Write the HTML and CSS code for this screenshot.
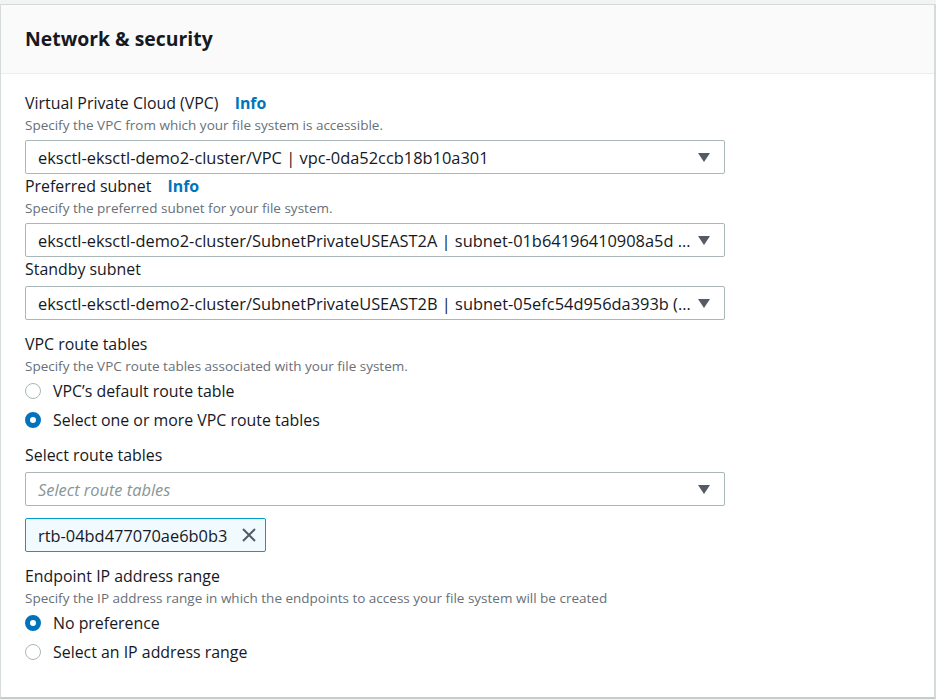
FILE: index.html
```html
<!DOCTYPE html>
<html lang="en">
<head>
<meta charset="utf-8">
<title>Network &amp; security</title>
<link rel="stylesheet" href="styles.css">
</head>
<body>
<section class="panel">
  <header class="panel-header">
    <h2 class="panel-title">Network &amp; security</h2>
  </header>
  <div class="panel-body">
    <div class="field">
      <div class="label">Virtual Private Cloud (VPC) <a class="info">Info</a></div>
      <div class="desc">Specify the VPC from which your file system is accessible.</div>
      <div class="select"><span class="select-text">eksctl-eksctl-demo2-cluster/VPC | vpc-0da52ccb18b10a301</span><span class="caret"></span></div>
    </div>
    <div class="field">
      <div class="label">Preferred subnet <a class="info">Info</a></div>
      <div class="desc">Specify the preferred subnet for your file system.</div>
      <div class="select"><span class="select-text">eksctl-eksctl-demo2-cluster/SubnetPrivateUSEAST2A | subnet-01b64196410908a5d (us-east-2a)</span><span class="caret"></span></div>
    </div>
    <div class="field">
      <div class="label">Standby subnet</div>
      <div class="select"><span class="select-text">eksctl-eksctl-demo2-cluster/SubnetPrivateUSEAST2B | subnet-05efc54d956da393b (us-east-2b)</span><span class="caret"></span></div>
    </div>
    <div class="field field-gap">
      <div class="label">VPC route tables</div>
      <div class="desc">Specify the VPC route tables associated with your file system.</div>
      <div class="radios">
        <div class="radio"><span class="dot"></span>VPC’s default route table</div>
        <div class="radio"><span class="dot on"></span>Select one or more VPC route tables</div>
      </div>
    </div>
    <div class="field field-gap">
      <div class="label">Select route tables</div>
      <div class="select"><span class="select-text placeholder">Select route tables</span><span class="caret"></span></div>
      <div class="token">rtb-04bd477070ae6b0b3
        <svg class="token-x" width="16" height="16" viewBox="0 0 16 16"><path d="M2 2 L14 14 M14 2 L2 14" stroke="#545b64" stroke-width="2" fill="none"/></svg>
      </div>
    </div>
    <div class="field field-gap">
      <div class="label">Endpoint IP address range</div>
      <div class="desc">Specify the IP address range in which the endpoints to access your file system will be created</div>
      <div class="radios">
        <div class="radio"><span class="dot on"></span>No preference</div>
        <div class="radio"><span class="dot"></span>Select an IP address range</div>
      </div>
    </div>
  </div>
</section>
</body>
</html>
```
FILE: styles.css
```css
html, body {
  margin: 0;
  padding: 0;
}
body {
  background: #f2f3f3;
  font-family: "Open Sans", "Liberation Sans", sans-serif;
  color: #16191f;
  padding-top: 4px;
}
.panel {
  width: 933px;
  height: 692px;
  background: #ffffff;
  border: 1px solid #d5dbdb;
  border-bottom: 2px solid #c4cccc;
  border-right: 2px solid #d5dbdb;
}
.panel-header {
  height: 68px;
  background: #fafafa;
  border-bottom: 1px solid #eaeded;
  display: flex;
  align-items: center;
  padding-left: 24px;
}
.panel-title {
  margin: 0;
  font-size: 19.4px;
  font-weight: 700;
  padding-bottom: 2px;
}
.panel-body {
  padding: 17px 24px 0 24px;
}
.field {
  display: flex;
  flex-direction: column;
  align-items: flex-start;
}
.field-gap {
  margin-top: 12px;
}
.label {
  font-size: 15.9px;
  line-height: 22px;
  margin-top: 1px;
}
.info {
  color: #0073bb;
  font-weight: 700;
  margin-left: 12px;
}
.desc {
  font-size: 13.5px;
  line-height: 18px;
  color: #687078;
  margin-top: 2px;
}
.select {
  box-sizing: border-box;
  width: 700px;
  height: 34px;
  margin-top: 6px;
  border: 1px solid #aab7b8;
  border-radius: 2px;
  display: flex;
  align-items: center;
  padding: 0 14px 0 12px;
  font-size: 16.4px;
}
.select-text {
  flex: 1;
  white-space: nowrap;
  overflow: hidden;
  text-overflow: ellipsis;
  min-width: 0;
}
.placeholder {
  color: #879596;
  font-style: italic;
}
.caret {
  width: 0;
  height: 0;
  border-left: 6px solid transparent;
  border-right: 6px solid transparent;
  border-top: 9px solid #545b64;
  margin-left: 4px;
}
.radios {
  display: flex;
  flex-direction: column;
  gap: 7px;
  margin-top: 5px;
}
.radio {
  display: flex;
  align-items: center;
  font-size: 15.9px;
  line-height: 22px;
}
.dot {
  box-sizing: border-box;
  width: 16px;
  height: 16px;
  border-radius: 50%;
  border: 1.5px solid #aab7b8;
  margin-right: 12px;
  background: #fff;
}
.dot.on {
  border: 5px solid #0073bb;
}
.token {
  box-sizing: border-box;
  margin-top: 12px;
  height: 34px;
  display: flex;
  align-items: center;
  padding: 0 8px 0 12px;
  background: #f1faff;
  border: 1px solid #00a1c9;
  border-radius: 2px;
  font-size: 16.4px;
}
.token-x {
  margin-left: 14px;
}
```
